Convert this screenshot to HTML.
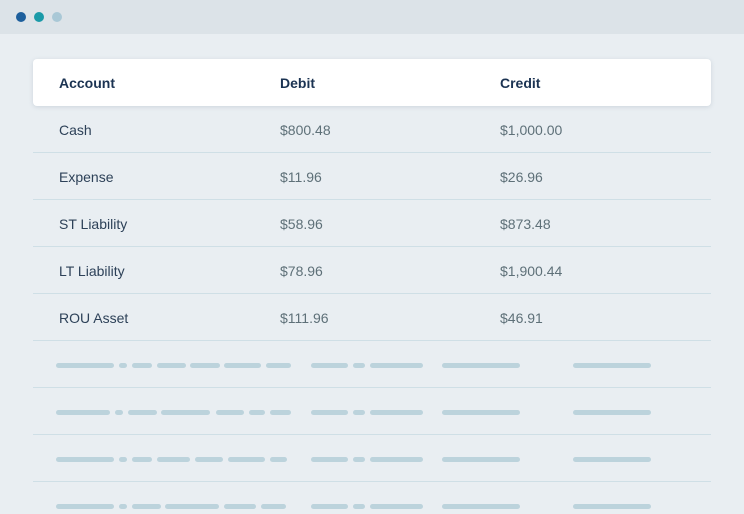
<!DOCTYPE html>
<html><head><style>
*{margin:0;padding:0;box-sizing:border-box}
body{width:744px;height:514px;background:#e9eef2;position:relative;overflow:hidden;font-family:"Liberation Sans",sans-serif}
.top{position:absolute;left:0;top:0;width:744px;height:34px;background:#dce3e8}
.dot{position:absolute;top:12px;width:10px;height:10px;border-radius:50%}
.hdr{position:absolute;left:33px;top:59px;width:678px;height:47px;background:#fff;border-radius:4px;box-shadow:0 1px 4px rgba(120,140,160,.25)}
.t{position:absolute;font-size:14px;line-height:16px}
.h{font-weight:bold;color:#1b3352;top:75px}
.a{color:#2d4158}
.n{color:#5e7078}
.sep{position:absolute;left:33px;width:678px;height:1px;background:#cfdfe6}
.b{position:absolute;height:5px;border-radius:3px;background:#bcd3dc}
</style></head><body>
<div class="top"></div>
<div class="dot" style="left:16px;background:#1d5f9c"></div>
<div class="dot" style="left:34px;background:#1a9aa8"></div>
<div class="dot" style="left:52px;background:#a9c8d6"></div>
<div class="hdr"></div>
<div class="t h" style="left:59px">Account</div>
<div class="t h" style="left:280px">Debit</div>
<div class="t h" style="left:500px">Credit</div>

<div class="t a" style="left:59px;top:122px">Cash</div><div class="t n" style="left:280px;top:122px">$800.48</div><div class="t n" style="left:500px;top:122px">$1,000.00</div>
<div class="sep" style="top:152px"></div>
<div class="t a" style="left:59px;top:169px">Expense</div><div class="t n" style="left:280px;top:169px">$11.96</div><div class="t n" style="left:500px;top:169px">$26.96</div>
<div class="sep" style="top:199px"></div>
<div class="t a" style="left:59px;top:216px">ST Liability</div><div class="t n" style="left:280px;top:216px">$58.96</div><div class="t n" style="left:500px;top:216px">$873.48</div>
<div class="sep" style="top:246px"></div>
<div class="t a" style="left:59px;top:263px">LT Liability</div><div class="t n" style="left:280px;top:263px">$78.96</div><div class="t n" style="left:500px;top:263px">$1,900.44</div>
<div class="sep" style="top:293px"></div>
<div class="t a" style="left:59px;top:310px">ROU Asset</div><div class="t n" style="left:280px;top:310px">$111.96</div><div class="t n" style="left:500px;top:310px">$46.91</div>
<div class="sep" style="top:340px"></div>
<div class="sep" style="top:387px"></div>
<div class="sep" style="top:434px"></div>
<div class="sep" style="top:481px"></div>

<!-- row 1 y 363 -->
<div class="b" style="top:363px;left:56px;width:58px"></div><div class="b" style="top:363px;left:119px;width:8px"></div><div class="b" style="top:363px;left:132px;width:20px"></div><div class="b" style="top:363px;left:157px;width:29px"></div><div class="b" style="top:363px;left:190px;width:30px"></div><div class="b" style="top:363px;left:224px;width:37px"></div><div class="b" style="top:363px;left:266px;width:25px"></div>
<div class="b" style="top:363px;left:311px;width:37px"></div><div class="b" style="top:363px;left:353px;width:12px"></div><div class="b" style="top:363px;left:370px;width:53px"></div><div class="b" style="top:363px;left:442px;width:78px"></div><div class="b" style="top:363px;left:573px;width:78px"></div>
<!-- row 2 -->
<div class="b" style="top:410px;left:56px;width:54px"></div><div class="b" style="top:410px;left:115px;width:8px"></div><div class="b" style="top:410px;left:128px;width:29px"></div><div class="b" style="top:410px;left:161px;width:49px"></div><div class="b" style="top:410px;left:216px;width:28px"></div><div class="b" style="top:410px;left:249px;width:16px"></div><div class="b" style="top:410px;left:270px;width:21px"></div>
<div class="b" style="top:410px;left:311px;width:37px"></div><div class="b" style="top:410px;left:353px;width:12px"></div><div class="b" style="top:410px;left:370px;width:53px"></div><div class="b" style="top:410px;left:442px;width:78px"></div><div class="b" style="top:410px;left:573px;width:78px"></div>
<!-- row 3 -->
<div class="b" style="top:457px;left:56px;width:58px"></div><div class="b" style="top:457px;left:119px;width:8px"></div><div class="b" style="top:457px;left:132px;width:20px"></div><div class="b" style="top:457px;left:157px;width:33px"></div><div class="b" style="top:457px;left:195px;width:28px"></div><div class="b" style="top:457px;left:228px;width:37px"></div><div class="b" style="top:457px;left:270px;width:17px"></div>
<div class="b" style="top:457px;left:311px;width:37px"></div><div class="b" style="top:457px;left:353px;width:12px"></div><div class="b" style="top:457px;left:370px;width:53px"></div><div class="b" style="top:457px;left:442px;width:78px"></div><div class="b" style="top:457px;left:573px;width:78px"></div>
<!-- row 4 -->
<div class="b" style="top:504px;left:56px;width:58px"></div><div class="b" style="top:504px;left:119px;width:8px"></div><div class="b" style="top:504px;left:132px;width:29px"></div><div class="b" style="top:504px;left:165px;width:54px"></div><div class="b" style="top:504px;left:224px;width:32px"></div><div class="b" style="top:504px;left:261px;width:25px"></div>
<div class="b" style="top:504px;left:311px;width:37px"></div><div class="b" style="top:504px;left:353px;width:12px"></div><div class="b" style="top:504px;left:370px;width:53px"></div><div class="b" style="top:504px;left:442px;width:78px"></div><div class="b" style="top:504px;left:573px;width:78px"></div>
</body></html>
